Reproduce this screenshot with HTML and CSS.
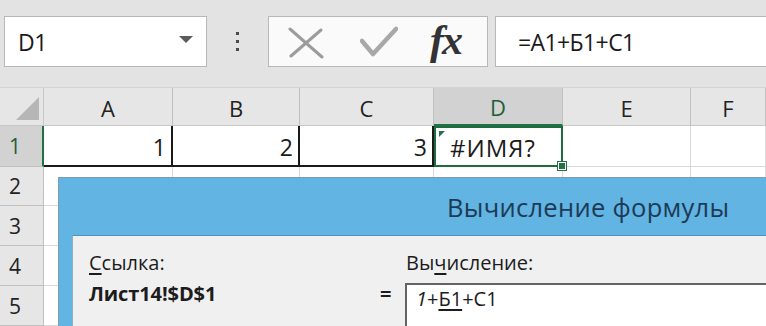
FILE: index.html
```html
<!DOCTYPE html>
<html lang="ru">
<head>
<meta charset="utf-8">
<link rel="stylesheet" href="styles.css">
</head>
<body>
<div class="app">
  <div class="toolbar">
    <div class="namebox">
      <span class="name">D1</span>
      <span class="dropdown"></span>
    </div>
    <div class="dots"><i></i><i></i><i></i></div>
    <div class="fxbox">
      <svg class="ico-x" width="36" height="32" viewBox="0 0 36 32"><path d="M2 2 L34 30 M33 3 L3 29" stroke="#9c9c9c" stroke-width="3" fill="none" stroke-linecap="round"/></svg>
      <svg class="ico-check" width="38" height="32" viewBox="0 0 38 32"><path d="M2 15 L13 28 L36 3" stroke="#a8a8a8" stroke-width="4.5" fill="none" stroke-linecap="round" stroke-linejoin="round"/></svg>
      <span class="fx">fx</span>
    </div>
    <div class="formula">=A1+Б1+С1</div>
  </div>

  <div class="sheet">
    <div class="corner"><span class="tri"></span></div>
    <div class="colh">A</div>
    <div class="colh">B</div>
    <div class="colh">C</div>
    <div class="colh sel">D</div>
    <div class="colh">E</div>
    <div class="colh">F</div>

    <div class="rowh sel">1</div>
    <div class="cell bord num">1</div>
    <div class="cell bord num">2</div>
    <div class="cell bord num">3</div>
    <div class="cell active"><span class="err-tri"></span>#ИМЯ?<span class="handle"></span></div>
    <div class="cell r1"></div>
    <div class="cell r1"></div>

    <div class="rowh">2</div>
    <div class="cell"></div><div class="cell"></div><div class="cell"></div><div class="cell"></div><div class="cell"></div><div class="cell"></div>
    <div class="rowh">3</div>
    <div class="cell"></div><div class="cell"></div><div class="cell"></div><div class="cell"></div><div class="cell"></div><div class="cell"></div>
    <div class="rowh">4</div>
    <div class="cell"></div><div class="cell"></div><div class="cell"></div><div class="cell"></div><div class="cell"></div><div class="cell"></div>
    <div class="rowh">5</div>
    <div class="cell"></div><div class="cell"></div><div class="cell"></div><div class="cell"></div><div class="cell"></div><div class="cell"></div>
  </div>

  <div class="dialog">
    <div class="dlg-title">Вычисление формулы</div>
    <div class="dlg-body">
      <div class="lbl"><u>С</u>сылка:</div>
      <div></div>
      <div class="lbl">Вы<u>ч</u>исление:</div>
      <div class="ref">Лист14!$D$1</div>
      <div class="eq">=</div>
      <div class="evalbox"><i class="it">1</i>+<u>Б1</u>+С1</div>
    </div>
  </div>
</div>
</body>
</html>
```

FILE: styles.css
```css
* { box-sizing: border-box; }
html, body { margin: 0; padding: 0; }
body {
  width: 766px;
  height: 326px;
  overflow: hidden;
  background: #e6e6e6;
  font-family: "Open Sans", "Noto Sans", sans-serif;
  color: #1b1b1b;
}
.app { position: relative; width: 766px; height: 326px; overflow: hidden; }

.toolbar {
  height: 88px;
  display: flex;
  align-items: flex-start;
  padding-top: 16px;
  background: #e3e3e3;
  border-bottom: 1px solid #d4d4d4;
}
.namebox {
  margin-left: 4px;
  width: 203px;
  height: 51px;
  background: #fff;
  border: 1px solid #b8b8b8;
  display: flex;
  align-items: center;
  padding-left: 13px;
  padding-right: 13px;
  justify-content: space-between;
}
.name { font-size: 23px; letter-spacing: -0.5px; }
.dropdown {
  width: 0; height: 0;
  border-left: 7px solid transparent;
  border-right: 7px solid transparent;
  border-top: 7px solid #5c5c5c;
  margin-top: -4px;
}
.dots {
  width: 61px;
  height: 51px;
  display: flex;
  flex-direction: column;
  align-items: center;
  justify-content: center;
  gap: 5px;
}
.dots i { display: block; width: 3px; height: 3px; background: #4a4a4a; }
.fxbox {
  width: 220px;
  height: 51px;
  background: #fafafa;
  border: 1px solid #b8b8b8;
  display: flex;
  align-items: center;
  padding-left: 19px;
}
.ico-x { margin-top: 2px; }
.ico-check { margin-left: 36px; margin-top: 0px; }
.fx {
  margin-left: 32px;
  font-family: "Liberation Serif", "DejaVu Serif", serif;
  font-style: italic;
  font-weight: bold;
  font-size: 42px;
  line-height: 42px;
  color: #333;
  letter-spacing: -2px;
  margin-top: -4px;
}
.formula {
  margin-left: 7px;
  flex: 1;
  height: 51px;
  background: #fff;
  border: 1px solid #b8b8b8;
  border-right: none;
  display: flex;
  align-items: center;
  padding-left: 22px;
  font-size: 23px;
  letter-spacing: -0.6px;
}

.sheet {
  display: grid;
  grid-template-columns: 44px 129px 127px 134px 129px 128px 1fr;
  grid-template-rows: 38px 41px 39px 40px 40px 40px;
  background: #fff;
}
.corner {
  background: #e6e6e6;
  border-right: 1px solid #c8c8c8;
  border-bottom: 1px solid #c8c8c8;
  position: relative;
}
.tri {
  position: absolute;
  right: 4px;
  bottom: 5px;
  width: 0; height: 0;
  border-left: 23px solid transparent;
  border-bottom: 23px solid #b6b6b6;
}
.colh {
  background: #e6e6e6;
  border-right: 1px solid #c0c0c0;
  border-bottom: 1px solid #c8c8c8;
  display: flex;
  align-items: center;
  justify-content: center;
  font-size: 22px;
  color: #222;
  padding-top: 2px;
}
.colh.sel {
  background: #d2d2d2;
  border-bottom: 2px solid #217346;
  color: #1e5e38;
}
.rowh {
  background: #e6e6e6;
  border-right: 1px solid #c0c0c0;
  border-bottom: 1px solid #c0c0c0;
  display: flex;
  align-items: center;
  padding-left: 9px;
  font-size: 21px;
  color: #222;
}
.rowh.sel {
  background: #d2d2d2;
  border-right: 2px solid #217346;
  color: #1e5e38;
}
.cell {
  border-right: 1px solid #d9d9d9;
  border-bottom: 1px solid #d9d9d9;
  font-size: 23px;
  display: flex;
  align-items: center;
  padding: 2px 5px 0 5px;
}
.cell.bord {
  border-right: 2px solid #1a1a1a;
  border-bottom: 2px solid #1a1a1a;
}
.num { justify-content: flex-end; }
.cell.active {
  position: relative;
  border: 2px solid #1f6b40;
  padding-left: 14px;
  font-size: 24px;
  letter-spacing: 1px;
}
.err-tri {
  position: absolute;
  left: 3px;
  top: 3px;
  width: 0; height: 0;
  border-top: 6px solid #217346;
  border-right: 6px solid transparent;
}
.handle {
  position: absolute;
  right: -5px;
  bottom: -5px;
  width: 8px;
  height: 8px;
  background: #217346;
  border: 1px solid #fff;
  outline: 1px solid #217346;
}
.cell.r1 { border-bottom: 1px solid #d9d9d9; }

.dialog {
  position: absolute;
  left: 58px;
  top: 177px;
  width: 730px;
  height: 170px;
  background: #62b4e3;
  border: 1px solid #7c9db3;
}
.dlg-title {
  height: 57px;
  padding-left: 388px;
  padding-top: 12px;
  font-size: 25.5px;
  color: #1d3a55;
  letter-spacing: 0.3px;
}
.dlg-body {
  margin-left: 13px;
  height: 120px;
  background: #f0f0f0;
  border-top: 1px solid #4f93c2;
  border-left: 1px solid #8ab0c9;
  display: grid;
  grid-template-columns: 291px 26px 1fr;
  grid-template-rows: 26px 1fr;
  padding-left: 16px;
  padding-top: 14px;
  font-size: 20px;
  color: #1c1c1c;
}
.lbl { line-height: 26px; }
.lbl u { text-underline-offset: 3px; }
.ref {
  font-weight: bold;
  padding-top: 4px;
  letter-spacing: -0.1px;
}
.eq { font-weight: bold; padding-top: 4px; }
.evalbox {
  margin-top: 7px;
  margin-left: -1px;
  background: #fff;
  border-top: 2px solid #646464;
  border-left: 2px solid #646464;
  padding-left: 9px;
  padding-top: 0;
  height: 60px;
}
.evalbox .it { font-style: italic; }
.evalbox u { text-underline-offset: 3px; }
```
